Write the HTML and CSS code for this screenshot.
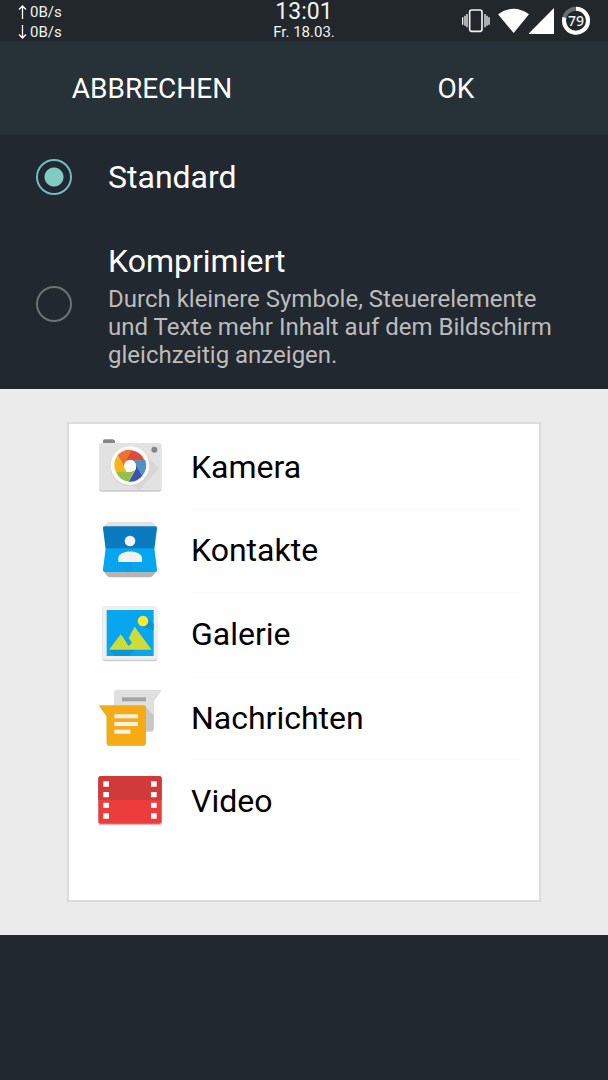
FILE: index.html
```
<!DOCTYPE html>
<html lang="de">

<head>
    <meta charset="UTF-8">
    <meta name="viewport" content="width=device-width, initial-scale=1.0">
    <title>Anzeige</title>
    <link rel="stylesheet" href="styles.css">
</head>

<body>
    <header class="status">
        <div class="traffic">
            <span><svg class="arrow" viewBox="0 0 9 14"><path d="M4.500 14V1M1 4.500L4.500 1L8 4.500" /></svg>0B/s</span>
            <span><svg class="arrow" viewBox="0 0 9 14"><path d="M4.500 0V13M1 9.500L4.500 13L8 9.500" /></svg>0B/s</span>
        </div>
        <div class="clock">
            <time class="time">13:01</time>
            <span class="date">Fr. 18.03.</span>
        </div>
        <div class="indicators">
            <svg class="vibrate" viewBox="36 24 84 81" fill="none" stroke="#f2f2f2">
                <rect x="59" y="30" width="37" height="64" rx="6" stroke-width="5" />
                <path d="M51 42V82M105 42V82M45 47V77M111 47V77M38 52V74M117 52V74" stroke-width="4" />
            </svg>
            <svg class="wifi" viewBox="144 24 93 81">
                <path d="M144 43Q190 10 237 43L191 99Z" fill="#fff" />
            </svg>
            <svg class="signal" viewBox="237 24 78 81">
                <path d="M312 24V102H235Z" fill="#fff" />
            </svg>
            <div class="battery">
                <svg viewBox="333 18 90 90" fill="none" stroke-width="12">
                    <circle cx="378" cy="62" r="36" stroke="#6b6e70" />
                    <path d="M378 26A36 36 0 1 1 343.200 52.700" stroke="#fff" />
                </svg>
                <span class="level">79</span>
            </div>
        </div>
    </header>

    <div class="actions">
        <button type="button">ABBRECHEN</button>
        <button type="button">OK</button>
    </div>

    <main>
        <form class="options">
            <div class="option">
                <input type="radio" name="density" id="standard" checked>
                <label for="standard">Standard</label>
            </div>
            <div class="option option-long">
                <input type="radio" name="density" id="compact">
                <label for="compact">Komprimiert
                    <span class="hint">Durch kleinere Symbole, Steuerelemente und Texte mehr Inhalt auf dem Bildschirm gleichzeitig anzeigen.</span>
                </label>
            </div>
        </form>

        <section class="preview">
            <ul class="apps">
                <li>
                    <svg class="icon" viewBox="39 14 192 192">
                        <path d="M54 42V32Q54 27 60 27H83Q88 27 90 32V42Z" fill="#858585" />
                        <rect x="42" y="41" width="187" height="143" rx="8" fill="#c9c9c9" />
                        <rect x="42" y="38" width="187" height="142" rx="8" fill="#e2e2e2" />
                        <path d="M176 67L223 114L180 160L163 180L111 146Z" fill="#d8d8d8" />
                        <circle cx="135" cy="109" r="59" fill="#d2d2d2" />
                        <circle cx="135" cy="106" r="58" fill="#fafafa" />
                        <path d="M103 73A46 46 0 0 1 176 85L181 91H132L118 101Z" fill="#df4a3c" />
                        <path d="M181 90A48 48 0 0 1 172 136L149 97L145 90Z" fill="#4d91c5" />
                        <path d="M172 136A48 48 0 0 1 131 154L153 115L151 100Z" fill="#3f51ac" />
                        <path d="M131 154A48 48 0 0 1 93 125H137L150 119Z" fill="#91c34b" />
                        <path d="M93 125A48 48 0 0 1 98 75L120 113L124 125Z" fill="#fdb515" />
                        <path d="M98 75A48 48 0 0 1 141 59L121 94L117 108Z" fill="#ed7130" />
                        <circle cx="135" cy="106" r="18" fill="#fff" />
                        <circle cx="208" cy="58" r="9" fill="#858585" />
                    </svg>
                    <span class="name">Kamera</span>
                </li>
                <li>
                    <svg class="icon" viewBox="39 10 192 192">
                        <path d="M54 36L68 23Q70 21 74 21H197Q201 21 204 24L216 36Z" fill="#e2e2e2" />
                        <path d="M54 168H216L203 184Q200 188 195 188H75Q70 188 67 184Z" fill="#b5b5b5" />
                        <path d="M60 35H210Q217 35 216 42L208 104H62L54 42Q53 35 60 35Z" fill="#0b7bc0" />
                        <path d="M62 101H208L216 164Q217 172 209 172H61Q53 172 54 164Z" fill="#05a5ef" />
                        <path d="M101 143L132 172H145L140 140Z" fill="#0a9fe6" />
                        <circle cx="135" cy="79" r="16" fill="#f2f2f2" />
                        <path d="M100 142V131C100 104 171 104 171 131V142Z" fill="#f2f2f2" />
                    </svg>
                    <span class="name">Kontakte</span>
                </li>
                <li>
                    <svg class="icon" viewBox="39 12 192 192">
                        <rect x="52" y="27" width="165" height="163" rx="9" fill="#cfcfcf" />
                        <rect x="52" y="24" width="165" height="161" rx="9" fill="#efefef" />
                        <path d="M65 36H206V174H65Z" fill="#08a6ee" />
                        <path d="M185 58L206 79V98L163 80ZM72 155L91 174H130L150 155Z" fill="#0797d8" />
                        <path d="M72 155L107 109L130 139L139 136L131 120L149 86L200 155Z" fill="#cddc39" />
                        <path d="M118 123L130 144L141 135L131 119L125 125Z" fill="#08a6ee" />
                        <circle cx="174" cy="69" r="16" fill="#fdea30" />
                    </svg>
                    <span class="name">Galerie</span>
                </li>
                <li>
                    <svg class="icon" viewBox="39 10 192 192">
                        <path d="M96 24H228L206 54V139Q206 147 198 147H88V32Q88 24 96 24Z" fill="#cacaca" />
                        <path d="M96 21H228L206 51V136Q206 144 198 144H88V29Q88 21 96 21Z" fill="#e0e0e0" />
                        <path d="M182 74L206 98V136Q206 144 198 144H182Z" fill="#c7c7c7" />
                        <rect x="111" y="44" width="72" height="12" fill="#a4a4a4" />
                        <path d="M42 71H175Q183 71 183 79V182Q183 190 175 190H73Q65 190 65 182V102Z" fill="#cbbda1" />
                        <path d="M42 68H175Q183 68 183 76V179Q183 187 175 187H73Q65 187 65 179V99Z" fill="#f5ab14" />
                        <path d="M88 95H159V107H88ZM88 118H159V130H88ZM88 141H136V153H88Z" fill="#f5f2eb" />
                    </svg>
                    <span class="name">Nachrichten</span>
                </li>
                <li>
                    <svg class="icon" viewBox="39 9 192 192">
                        <rect x="40" y="33" width="190" height="145" rx="8" fill="#c9bcbc" />
                        <rect x="40" y="30" width="190" height="143" rx="8" fill="#ed3c3c" />
                        <path d="M48 30H222Q230 30 230 38V102H40V38Q40 30 48 30Z" fill="#d13a3a" />
                        <path d="M55 46H72V62H55ZM55 78H72V94H55ZM55 110H72V126H55ZM55 142H72V158H55ZM198 46H215V62H198ZM198 78H215V94H198ZM198 110H215V126H198ZM198 142H215V158H198Z" fill="#fafafa" />
                    </svg>
                    <span class="name">Video</span>
                </li>
            </ul>
        </section>
    </main>
</body>

</html>
```
FILE: styles.css
```
* {
    box-sizing: border-box;
}

body {
    margin: 0;
    min-height: 100vh;
    background: #21282f;
    color: #fff;
    font-family: Roboto, "Noto Sans", sans-serif;
}

svg {
    display: block;
}

.status {
    display: grid;
    grid-template-columns: 1fr auto 1fr;
    height: 41px;
    padding: 0 17px;
    background: #21272a;
    color: #f2f2f2;
}

.traffic {
    display: flex;
    flex-direction: column;
    padding: 2px 0 0 1px;
    font-size: 15px;
    line-height: 20px;
}

.traffic span {
    display: flex;
    align-items: center;
    gap: 3px;
}

.arrow {
    width: 9px;
    height: 14px;
    fill: none;
    stroke: #fff;
    stroke-width: 1.3;
}

.clock {
    display: flex;
    flex-direction: column;
    align-items: center;
}

.time {
    font-size: 23px;
    line-height: 24px;
}

.date {
    font-size: 15px;
    line-height: 17px;
}

.indicators {
    display: flex;
    justify-content: flex-end;
    align-items: center;
}

.vibrate {
    width: 28px;
    height: 27px;
    margin-right: 8px;
}

.wifi {
    width: 31px;
    height: 27px;
}

.signal {
    width: 26px;
    height: 27px;
    margin-right: 6px;
}

.battery {
    display: grid;
    width: 30px;
    height: 30px;
    place-items: center;
}

.battery svg,
.level {
    grid-area: 1 / 1;
}

.battery svg {
    width: 30px;
    height: 30px;
}

.level {
    font: 500 14px/16px "Noto Sans", sans-serif;
}

.actions {
    display: flex;
    height: 94px;
    background: #273238;
}

.actions button {
    flex: 1;
    padding: 2px 0 0;
    border: 0;
    background: none;
    color: #fff;
    font: 28px/32px Roboto, sans-serif;
}

.option {
    display: flex;
    align-items: center;
    gap: 36px;
    min-height: 84px;
    padding: 0 48px 0 36px;
    font-size: 32px;
    line-height: 38px;
}

.option-long {
    min-height: 170px;
}

.option-long label {
    padding-top: 2px;
}

.option input {
    appearance: none;
    flex: none;
    width: 36px;
    height: 36px;
    margin: 0;
    border: 2px solid #6d7274;
    border-radius: 50%;
}

.option input:checked {
    border-color: #72b9c0;
    background: radial-gradient(circle, #80cbc4 9px, transparent 10px);
}

.hint {
    display: block;
    margin-top: 5px;
    color: #bcbcbc;
    font-size: 24px;
    line-height: 28px;
}

.preview {
    padding: 33px 67px;
    background: #ebebeb;
}

.apps {
    display: grid;
    grid-template-rows: repeat(5, 1fr);
    min-height: 480px;
    margin: 0;
    padding: 1px 16px 57px 29px;
    border: 2px solid #dcdcdc;
    background: #fff;
    color: #000;
    list-style: none;
}

.apps li {
    display: flex;
    align-items: center;
    gap: 29px;
    font-size: 32px;
    line-height: 38px;
}

.name {
    display: flex;
    flex: 1;
    align-self: stretch;
    align-items: center;
}

.apps li:not(:last-child) .name {
    box-shadow: 0 1px #fbfbfb;
}

.icon {
    width: 64px;
    height: 64px;
}
```
